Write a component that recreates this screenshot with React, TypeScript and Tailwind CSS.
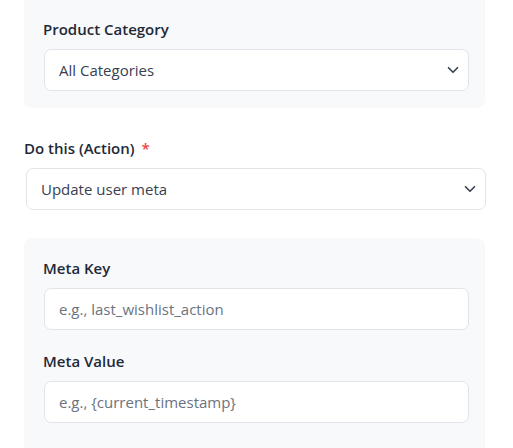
import React from "react";

const font = { fontFamily: '"Open Sans", "Noto Sans", sans-serif' };

function Chevron() {
  return (
    <svg width="18" height="18" viewBox="0 0 24 24" fill="none" stroke="#374151" strokeWidth="2.2" strokeLinecap="round" strokeLinejoin="round" className="absolute right-[6px] top-1/2 -translate-y-1/2">
      <path d="m6 9 6 6 6-6" />
    </svg>
  );
}

function SelectBox({ value, className }: { value: string; className: string }) {
  return (
    <div className={`relative flex h-[42px] items-center rounded-[7px] border border-[#e2e4e9] bg-white pl-[14px] text-[15px] text-[#374151] ${className}`}>
      <span>{value}</span>
      <Chevron />
    </div>
  );
}

function InputBox({ placeholder }: { placeholder: string }) {
  return (
    <div className="flex h-[42px] w-[425px] items-center rounded-[7px] border border-[#e2e4e9] bg-white pl-[14px] text-[15px] text-[#6b7280]">
      {placeholder}
    </div>
  );
}

export default function App() {
  return (
    <div className="h-[448px] w-[513px] overflow-hidden bg-white" style={font}>
      <div className="ml-[24px] mt-[-16px] w-[461px] rounded-[8px] bg-[#f8f9fb] pb-[17px] pl-[19px] pt-[33px]">
        <div className="mb-[8px] text-[15px] font-semibold leading-[24px] text-[#1f2937]">Product Category</div>
        <SelectBox value="All Categories" className="ml-[1px] w-[425px]" />
      </div>
      <div className="ml-[24px] mt-[28px] text-[15px] font-semibold leading-[24px] text-[#1f2937]">
        Do this (Action) <span className="ml-[3px] text-[#ef4444]">*</span>
      </div>
      <SelectBox value="Update user meta" className="ml-[26px] mt-[8px] w-[460px]" />
      <div className="ml-[24px] mt-[28px] w-[461px] rounded-[8px] bg-[#f8f9fb] pb-[40px] pl-[19px] pt-[18px]">
        <div className="mb-[8px] text-[15px] font-semibold leading-[24px] text-[#1f2937]">Meta Key</div>
        <div className="ml-[1px]"><InputBox placeholder="e.g., last_wishlist_action" /></div>
        <div className="mb-[8px] mt-[19px] text-[15px] font-semibold leading-[24px] text-[#1f2937]">Meta Value</div>
        <div className="ml-[1px]"><InputBox placeholder="e.g., {current_timestamp}" /></div>
      </div>
    </div>
  );
}
